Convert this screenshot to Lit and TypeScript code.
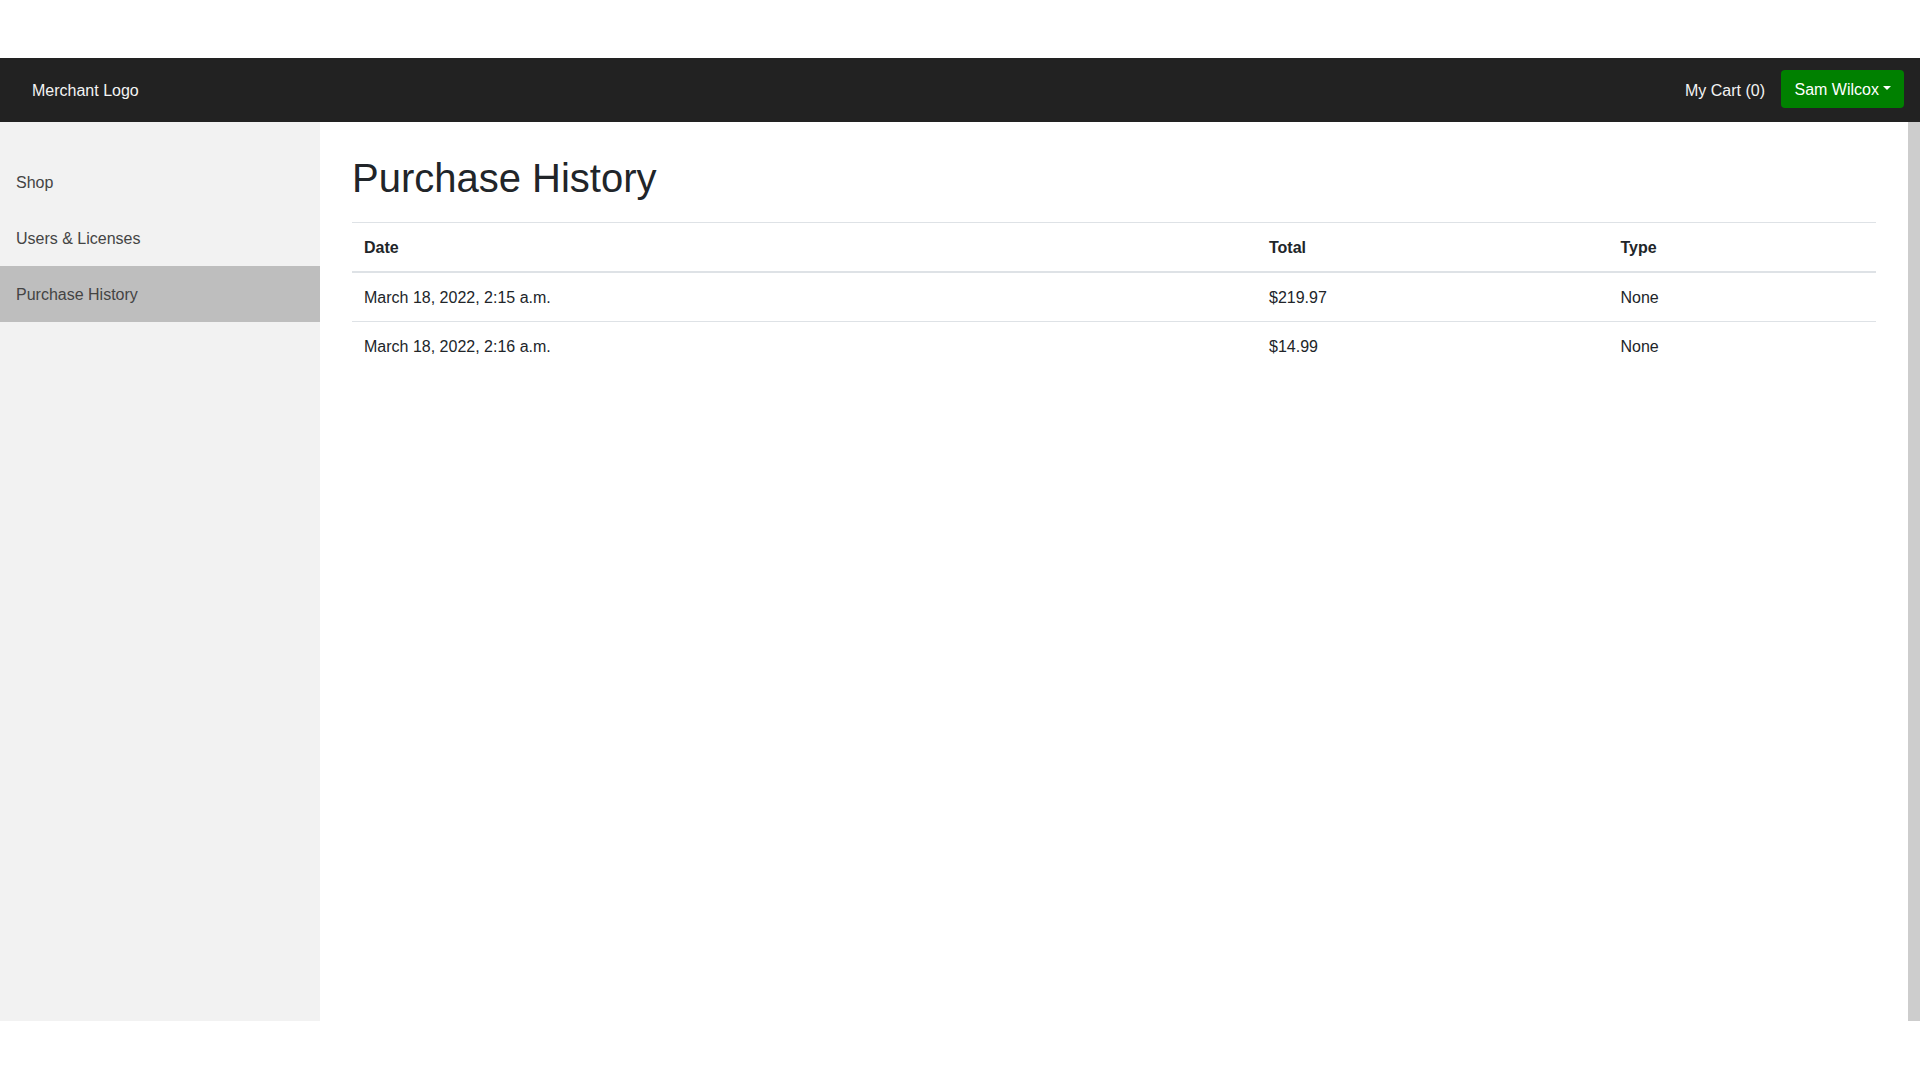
import { LitElement, html, css } from 'lit';
import { customElement } from 'lit/decorators.js';

const purchases = [
  { date: 'March 18, 2022, 2:15 a.m.', total: '$219.97', type: 'None' },
  { date: 'March 18, 2022, 2:16 a.m.', total: '$14.99', type: 'None' },
];

@customElement('app-root')
export class AppRoot extends LitElement {
  static override styles = css`
    :host {
      display: block;
      height: 1080px;
      padding-top: 58px;
      box-sizing: border-box;
      background: #fff;
      color: #212529;
      font-family: 'Liberation Sans', Arial, sans-serif;
      font-size: 16px;
      line-height: 24px;
    }

    .navbar {
      display: flex;
      align-items: center;
      height: 64px;
      padding: 0 16px 0 32px;
      background: #222;
      color: #f4f4f4;
    }

    .brand {
      flex: 1;
      padding-top: 2px;
    }

    .cart {
      margin-right: 16px;
      padding-top: 2px;
    }

    .user {
      display: flex;
      align-items: center;
      width: 123px;
      height: 38px;
      margin-bottom: 2px;
      padding: 2px 0 0 13.5px;
      box-sizing: border-box;
      border-radius: 4px;
      background: #008000;
      color: #fff;
    }

    .caret {
      display: inline-block;
      margin-left: 4.5px;
      margin-top: -5px;
      border-top: 4.8px solid #fff;
      border-left: 4.8px solid transparent;
      border-right: 4.8px solid transparent;
    }

    .body {
      display: flex;
      height: 899px;
    }

    .sidebar {
      flex: 0 0 320px;
      padding-top: 32px;
      box-sizing: border-box;
      background: #f2f2f2;
    }

    .sidebar a {
      display: block;
      padding: 17px 16px 15px;
      color: #444;
    }

    .sidebar a.active {
      background: #bebebe;
    }

    .content {
      flex: 1;
      min-width: 0;
      padding: 32px 32px 0;
    }

    h1 {
      margin: 0 0 20px;
      font-size: 40px;
      font-weight: 400;
      line-height: 48px;
    }

    table {
      width: 100%;
      border-collapse: collapse;
      table-layout: fixed;
    }

    th,
    td {
      padding: 13px 12px 11px;
      border-top: 1px solid #dee2e6;
      text-align: left;
    }

    th {
      font-weight: 700;
      border-bottom: 2px solid #dee2e6;
    }

    .col-date {
      width: 905px;
    }

    .col-total {
      width: 351.5px;
    }

    .scrollbar {
      flex: 0 0 12px;
      background: #cdcdcd;
    }
  `;

  override render() {
    return html`
      <nav class="navbar">
        <span class="brand">Merchant Logo</span>
        <span class="cart">My Cart (0)</span>
        <span class="user">Sam Wilcox<span class="caret"></span></span>
      </nav>
      <div class="body">
        <aside class="sidebar">
          <a>Shop</a>
          <a>Users &amp; Licenses</a>
          <a class="active">Purchase History</a>
        </aside>
        <main class="content">
          <h1>Purchase History</h1>
          <table>
            <colgroup>
              <col class="col-date" />
              <col class="col-total" />
              <col />
            </colgroup>
            <thead>
              <tr><th>Date</th><th>Total</th><th>Type</th></tr>
            </thead>
            <tbody>
              ${purchases.map(
                (p) => html`<tr><td>${p.date}</td><td>${p.total}</td><td>${p.type}</td></tr>`
              )}
            </tbody>
          </table>
        </main>
        <div class="scrollbar"></div>
      </div>
    `;
  }
}
